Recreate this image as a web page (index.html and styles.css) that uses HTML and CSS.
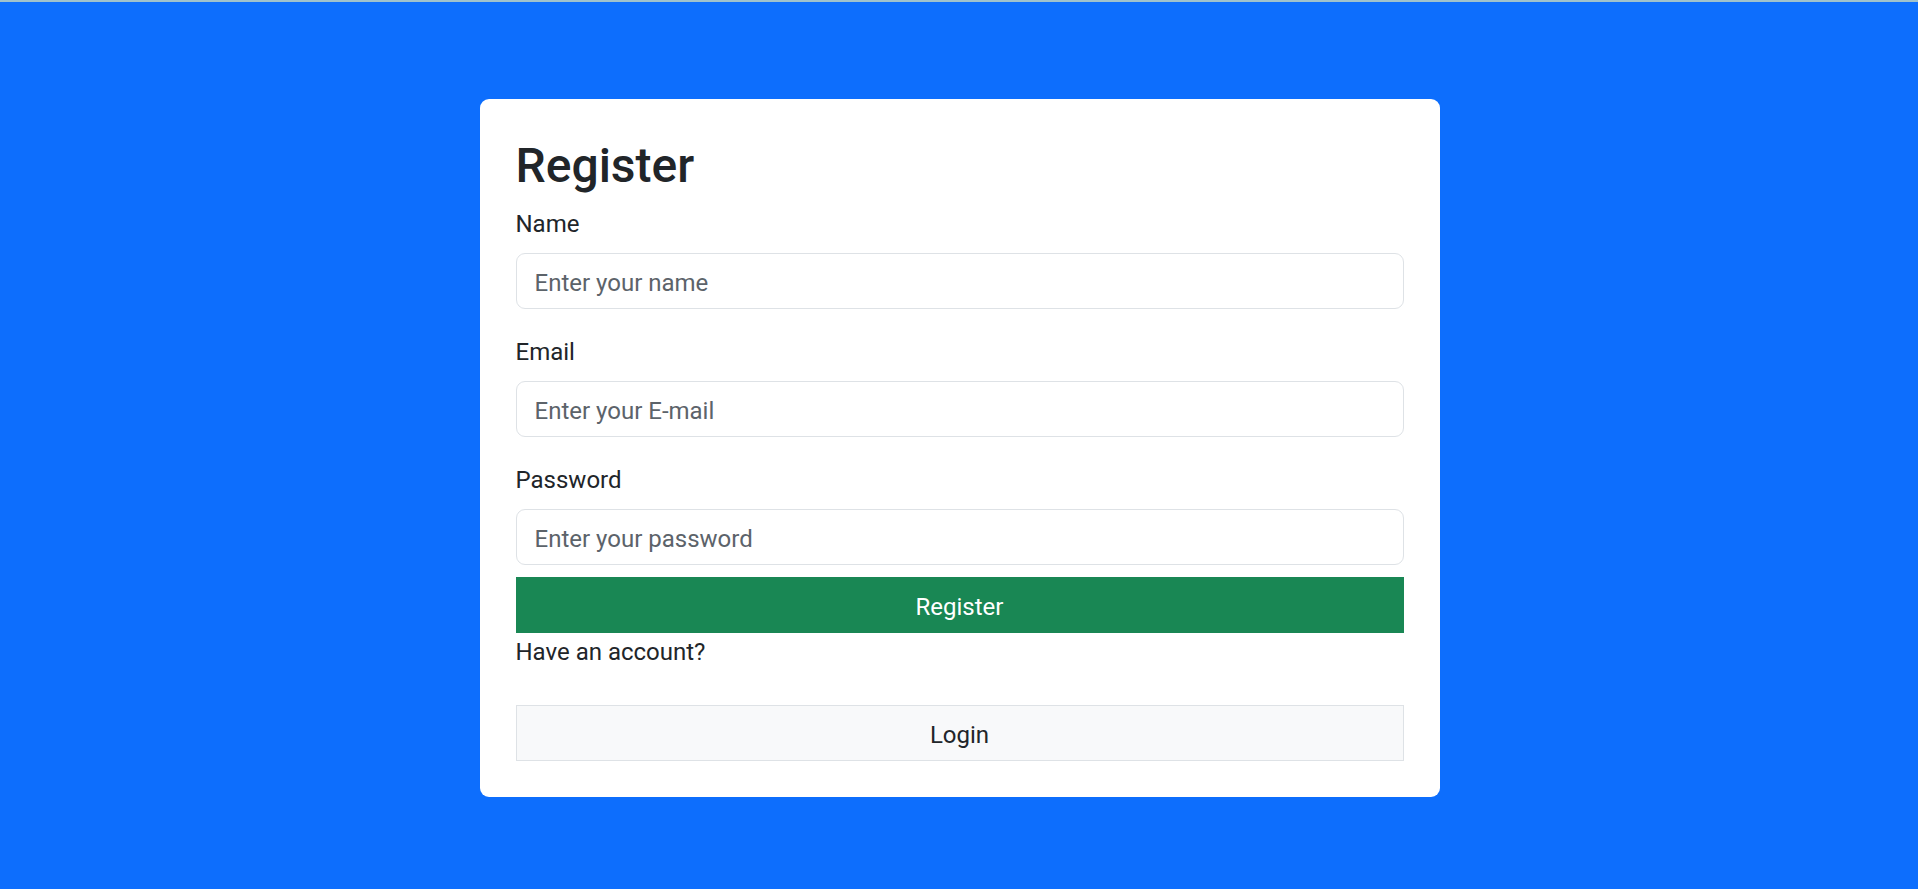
FILE: index.html
```html
<!DOCTYPE html>
<html lang="en">
<head>
<meta charset="utf-8">
<title>Register</title>
<link rel="stylesheet" href="styles.css">
</head>
<body>
<div class="topline"></div>
<main class="page">
  <div class="card">
    <h2 class="title">Register</h2>
    <form class="form">
      <div class="group">
        <label class="label" for="name">Name</label>
        <input class="control" id="name" type="text" placeholder="Enter your name">
      </div>
      <div class="group">
        <label class="label" for="email">Email</label>
        <input class="control" id="email" type="email" placeholder="Enter your E-mail">
      </div>
      <div class="group group-last">
        <label class="label" for="password">Password</label>
        <input class="control" id="password" type="password" placeholder="Enter your password">
      </div>
      <button class="btn btn-success" type="button">Register</button>
    </form>
    <p class="note">Have an account?</p>
    <button class="btn btn-light" type="button">Login</button>
  </div>
</main>
</body>
</html>
```

FILE: styles.css
```css
html, body {
  margin: 0;
  padding: 0;
  height: 100%;
}
body {
  background: #0d6efd;
  font-family: Roboto, "Liberation Sans", sans-serif;
  font-size: 24px;
  line-height: 1.5;
  color: #212529;
  overflow: hidden;
}
.topline {
  height: 2px;
  background: #a0c2cb;
}
.page {
  display: flex;
  justify-content: center;
  padding-top: 97px;
  padding-left: 1px;
}
.card {
  width: 960px;
  box-sizing: border-box;
  background: #fff;
  border-radius: 9px;
  padding: 36px;
}
.title {
  margin: 0 0 12px 0;
  padding-top: 5px;
  font-size: 48px;
  font-weight: 500;
  line-height: 52.6px;
}
.form {
  display: flex;
  flex-direction: column;
  margin: 0;
}
.group {
  display: flex;
  flex-direction: column;
  margin-bottom: 24px;
}
.group-last {
  margin-bottom: 12px;
}
.label {
  margin-bottom: 12px;
  padding-top: 3px;
  line-height: 33px;
}
.control {
  font: inherit;
  color: #212529;
  height: 56px;
  box-sizing: border-box;
  padding: 11px 18px 7px;
  border: 1px solid #dee2e6;
  border-radius: 9px;
  background: #fff;
  outline: none;
}
.control::placeholder {
  color: #5c636a;
  opacity: 1;
}
.btn {
  display: block;
  width: 100%;
  height: 56px;
  box-sizing: border-box;
  font: inherit;
  border-radius: 0;
  cursor: pointer;
  text-align: center;
  padding: 11px 18px 7px;
}
.btn-success {
  background: #198754;
  border: 1px solid #198754;
  color: #fff;
}
.btn-light {
  background: #f8f9fa;
  border: 1px solid #dee2e6;
  color: #212529;
}
.note {
  margin: 0 0 36px 0;
  padding-top: 3px;
  line-height: 33px;
}
```
